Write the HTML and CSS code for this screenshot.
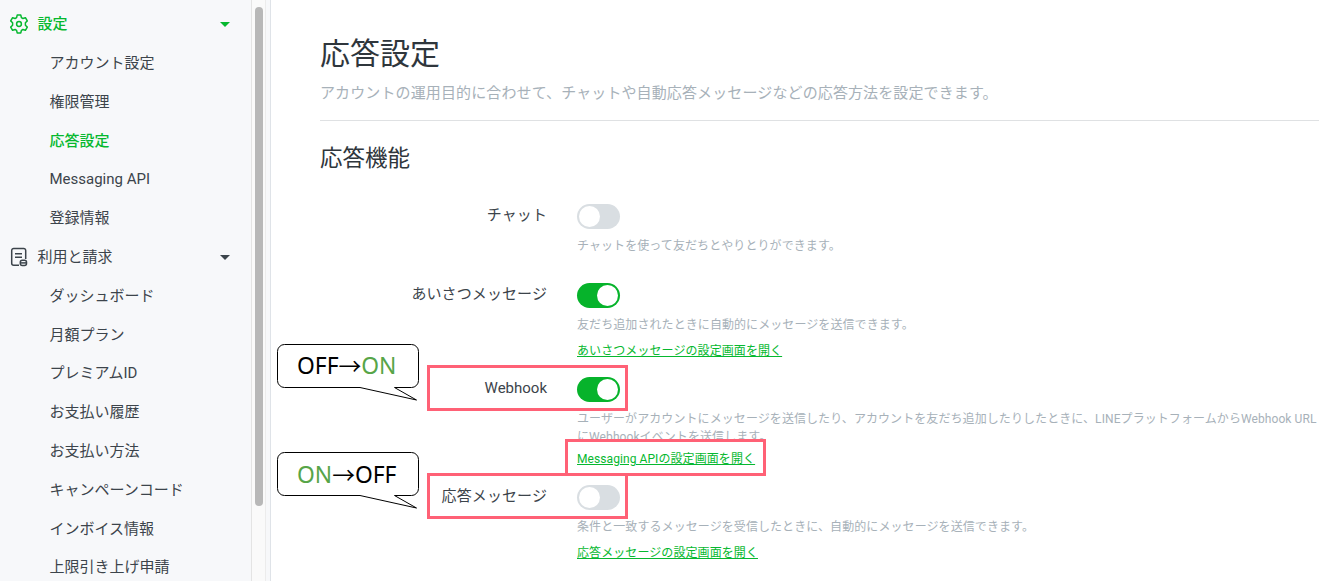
FILE: index.html
```html
<!DOCTYPE html>
<html lang="ja">
<head>
    <meta charset="UTF-8">
    <meta name="viewport" content="width=device-width, initial-scale=1.0">
    <title>応答設定</title>
    <link rel="stylesheet" href="styles.css">
</head>
<body>
<div class="app">
    <aside class="sidebar">
        <ul class="menu">
            <li class="group active">
                <svg class="group-icon" viewBox="0 0 20 20" width="20" height="20" fill="none" stroke="currentColor" stroke-width="1.5" stroke-linejoin="round">
                    <path d="M8.2 1.1h3.6l.6 2.5 1.5.9 2.5-.8 1.9 3.2-1.9 1.8v2.6l1.9 1.8-1.9 3.2-2.5-.8-1.5.9-.6 2.5H8.2l-.6-2.5-1.5-.9-2.5.8-1.9-3.2 1.9-1.8V8.7L1.7 6.9l1.9-3.2 2.5.8 1.5-.9z"/>
                    <circle cx="10" cy="10" r="2.4"/>
                </svg>
                <span>設定</span>
                <i class="caret"></i>
            </li>
            <li class="item">アカウント設定</li>
            <li class="item">権限管理</li>
            <li class="item active">応答設定</li>
            <li class="item latin">Messaging API</li>
            <li class="item">登録情報</li>
            <li class="group">
                <svg class="group-icon" viewBox="0 0 20 20" width="20" height="20" fill="none" stroke="currentColor" stroke-width="1.5">
                    <path d="M10 18.300H4.700a2 2 0 0 1-2-2V3.500a2 2 0 0 1 2-2h10a2 2 0 0 1 2 2V12"/>
                    <path d="M6 6.700h7M6 10.200h7"/>
                    <rect x="11.300" y="13.300" width="6.200" height="5.200" rx="2"/>
                    <path d="M11.300 15.900h6.200"/>
                </svg>
                <span>利用と請求</span>
                <i class="caret"></i>
            </li>
            <li class="item">ダッシュボード</li>
            <li class="item">月額プラン</li>
            <li class="item">プレミアムID</li>
            <li class="item">お支払い履歴</li>
            <li class="item">お支払い方法</li>
            <li class="item">キャンペーンコード</li>
            <li class="item">インボイス情報</li>
            <li class="item">上限引き上げ申請</li>
        </ul>
        <div class="scrollbar"><div class="thumb"></div></div>
    </aside>

    <main class="content">
        <h1>応答設定</h1>
        <p class="lead">アカウントの運用目的に合わせて、チャットや自動応答メッセージなどの応答方法を設定できます。</p>
        <h2>応答機能</h2>

        <div class="setting chat">
            <div class="label">チャット</div>
            <div class="field">
                <div class="toggle"></div>
                <p class="note">チャットを使って友だちとやりとりができます。</p>
            </div>
        </div>
        <div class="setting greeting">
            <div class="label">あいさつメッセージ</div>
            <div class="field">
                <div class="toggle on"></div>
                <p class="note">友だち追加されたときに自動的にメッセージを送信できます。</p>
                <a class="link">あいさつメッセージの設定画面を開く</a>
            </div>
        </div>
        <div class="setting webhook">
            <div class="label">Webhook</div>
            <div class="field">
                <div class="toggle on"></div>
                <p class="note">ユーザーがアカウントにメッセージを送信したり、アカウントを友だち追加したりしたときに、LINEプラットフォームからWebhook URL<br>にWebhookイベントを送信します。</p>
                <a class="link">Messaging APIの設定画面を開く</a>
            </div>
        </div>
        <div class="setting auto">
            <div class="label">応答メッセージ</div>
            <div class="field">
                <div class="toggle"></div>
                <p class="note">条件と一致するメッセージを受信したときに、自動的にメッセージを送信できます。</p>
                <a class="link">応答メッセージの設定画面を開く</a>
            </div>
        </div>
    </main>

    <!-- annotations over the settings -->
    <div class="frame frame-webhook"></div>
    <div class="frame frame-api"></div>
    <div class="frame frame-auto"></div>

    <div class="bubble bubble-webhook">
        <svg class="bubble-shape" width="144" height="60" viewBox="0 0 144 60">
            <path d="M8.500 1.500H135.500a7 7 0 0 1 7 7V37.500a7 7 0 0 1-7 7H118.500L140.500 57 84 44.500H8.500a7 7 0 0 1-7-7V8.500a7 7 0 0 1 7-7z"/>
        </svg>
        <div class="bubble-text"><span>OFF</span><span class="arrow">→</span><span class="green">ON</span></div>
    </div>
    <div class="bubble bubble-auto">
        <svg class="bubble-shape" width="144" height="60" viewBox="0 0 144 60">
            <path d="M8.500 1.500H135.500a7 7 0 0 1 7 7V37.500a7 7 0 0 1-7 7H118.500L140.500 57 84 44.500H8.500a7 7 0 0 1-7-7V8.500a7 7 0 0 1 7-7z"/>
        </svg>
        <div class="bubble-text"><span class="green">ON</span><span class="arrow">→</span><span>OFF</span></div>
    </div>
</div>
</body>
</html>
```
FILE: styles.css
```css
* {
    box-sizing: border-box;
}
body {
    margin: 0;
    font-family: Roboto, "Noto Sans CJK JP", sans-serif;
    font-size: 15px;
    color: #3c444b;
    background-color: #fff;
}
h1, h2, p, ul {
    margin: 0;
    padding: 0;
    font-weight: 400;
}
.app {
    position: relative;
    display: flex;
    width: 1330px;
    height: 581px;
    overflow: hidden;
}

/* sidebar */
.sidebar {
    display: flex;
    flex: none;
    width: 271px;
    background-color: #f7f8fa;
    border-right: 1px solid #dfe3e8;
}
.menu {
    width: 251px;
    padding-top: 3.4px;
    list-style: none;
}
.group, .item {
    display: flex;
    align-items: center;
    height: 38.8px;
}
.group {
    padding: 0 21px 0 9px;
}
.group-icon {
    margin: 2px 8.5px 0 0;
}
.item {
    padding-left: 49.5px;
}
.latin {
    padding-top: 3px;
}
.active {
    color: #06b82f;
    font-weight: 500;
}
.caret {
    margin-top: 3px;
    margin-left: auto;
    border: 5px solid transparent;
    border-top: 5px solid currentColor;
    border-bottom: 0;
}
.scrollbar {
    width: 15px;
    padding: 7px 3px 0;
    border-left: 1px solid #e4e4e4;
    border-right: 1px solid #ececec;
    background-color: #fafafa;
}
.thumb {
    width: 8px;
    height: 499px;
    border-radius: 4px;
    background-color: #b8b8b8;
}

/* main */
.content {
    width: 1059px;
    padding: 32px 11px 0 49px;
}
h1 {
    font-size: 30px;
    line-height: 44px;
    color: #2f363c;
}
.lead {
    padding: 6px 0 16px;
    border-bottom: 1px solid #dfe1e3;
    font-size: 15px;
    line-height: 22px;
    letter-spacing: 0.12px;
    color: #a7b1b9;
}
h2 {
    margin: 21px 0 29px;
    font-size: 22.5px;
    line-height: 33px;
    color: #2f363c;
}
.setting {
    display: flex;
    gap: 30px;
}
.chat {
    height: 78.5px;
}
.greeting {
    height: 94.5px;
}
.webhook {
    height: 108px;
}
.label {
    flex: none;
    width: 227px;
    line-height: 22px;
    letter-spacing: 0.1px;
    text-align: right;
}
.webhook .label {
    letter-spacing: 0;
}
.field {
    white-space: nowrap;
}
.toggle {
    width: 43px;
    height: 25px;
    padding: 2px;
    border-radius: 13px;
    background-color: #d9dee2;
}
.toggle::before {
    content: "";
    display: block;
    width: 21px;
    height: 21px;
    border-radius: 50%;
    background-color: #fff;
}
.toggle.on {
    background-color: #06b32b;
}
.toggle.on::before {
    margin-left: auto;
}
.note {
    margin-top: 8px;
    font-size: 12px;
    line-height: 18px;
    letter-spacing: 0.08px;
    color: #a7b1b9;
}
.link {
    display: block;
    margin-top: 8px;
    font-size: 12px;
    line-height: 18px;
    letter-spacing: 0.08px;
    color: #06b82f;
    text-decoration: underline;
}
.webhook .link {
    margin-top: 4px;
}

/* annotations */
.frame {
    position: absolute;
    border: 3px solid #ff6176;
}
.frame-webhook {
    left: 427px;
    top: 365px;
    width: 201px;
    height: 46px;
}
.frame-api {
    left: 565px;
    top: 439px;
    width: 201px;
    height: 37px;
}
.frame-auto {
    left: 427px;
    top: 473px;
    width: 201px;
    height: 46px;
}
.bubble {
    position: absolute;
    left: 276px;
    width: 144px;
    height: 60px;
}
.bubble-webhook {
    top: 343px;
}
.bubble-auto {
    top: 451px;
}
.bubble-shape {
    position: absolute;
    fill: #fff;
    stroke: #000;
}
.bubble-text {
    position: relative;
    display: flex;
    padding-left: 21px;
    font-family: "Noto Sans", sans-serif;
    font-size: 22.8px;
    line-height: 45px;
    color: #000;
}
.bubble-auto .bubble-text {
    line-height: 47px;
}
.arrow {
    font-family: "Noto Sans CJK JP", sans-serif;
}
.green {
    color: #57a548;
}
```
